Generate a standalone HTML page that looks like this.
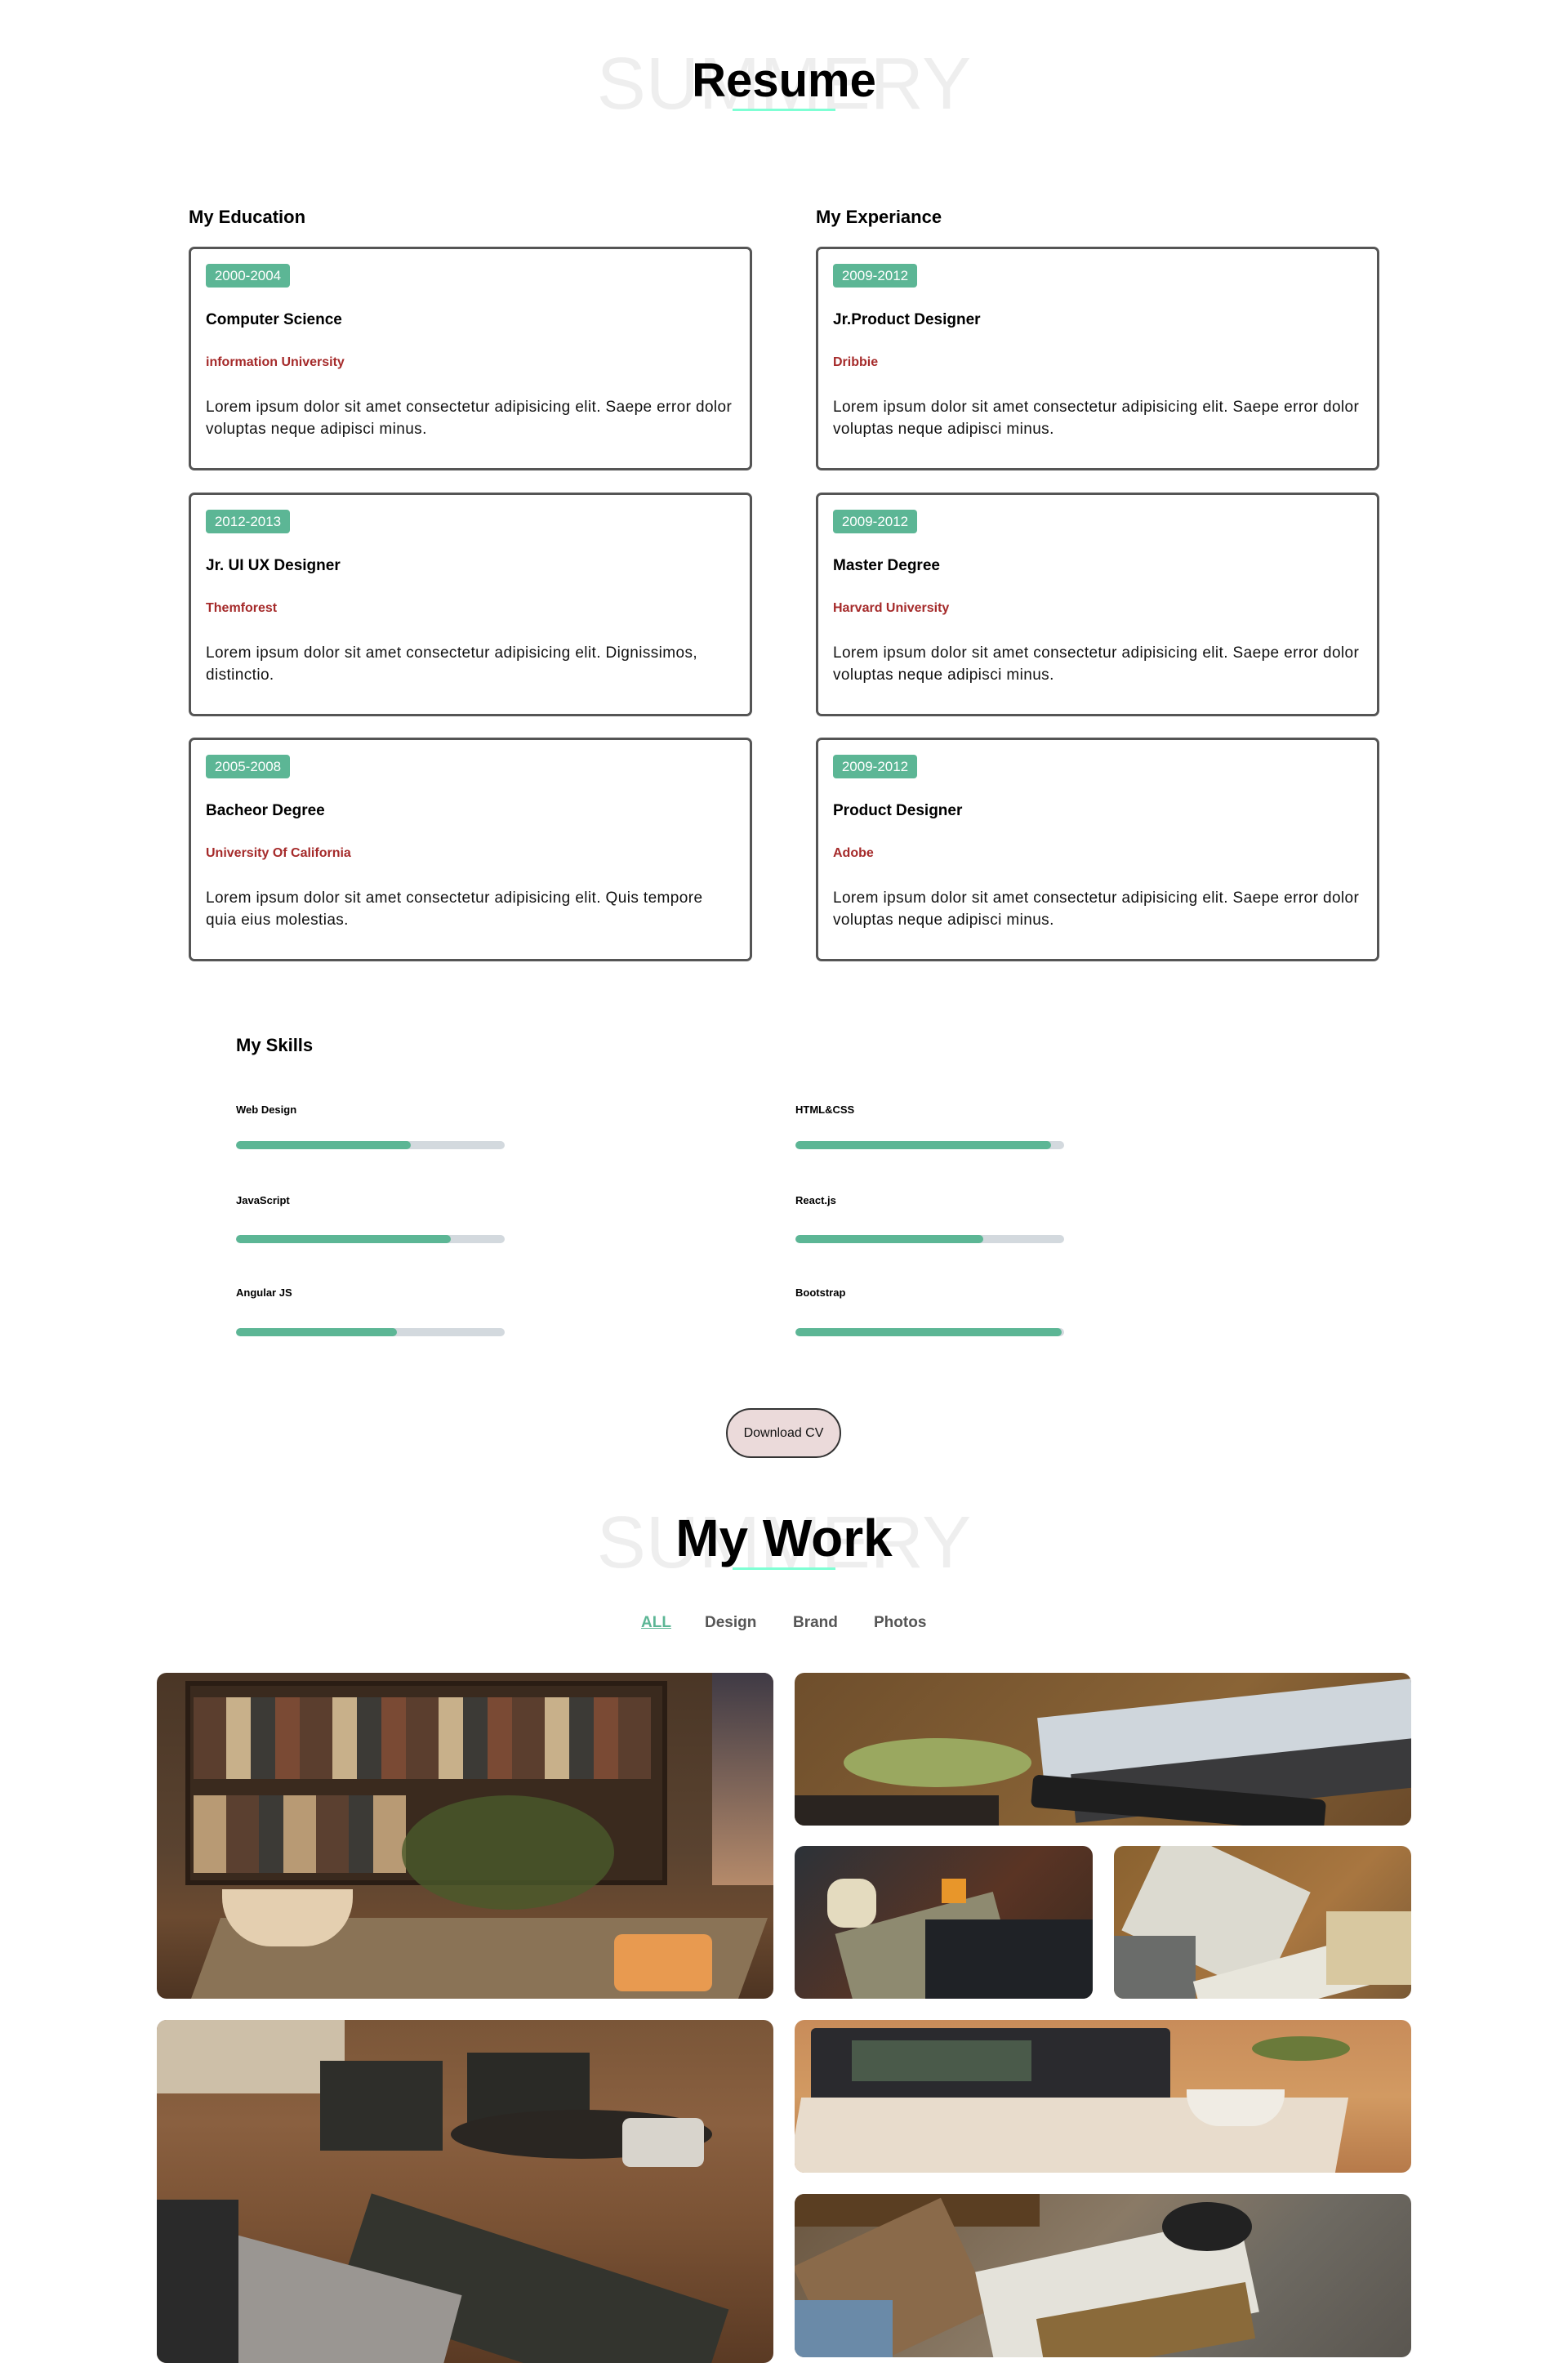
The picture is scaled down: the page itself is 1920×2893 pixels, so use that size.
<!DOCTYPE html>
<html><head><meta charset="utf-8"><style>
*{margin:0;padding:0;box-sizing:border-box}
body{width:1920px;height:2872px;background:#fff;position:relative;overflow:hidden;font-family:"Liberation Sans",Arial,sans-serif;color:#000}
.a{position:absolute;white-space:nowrap;line-height:1}
.ghost{font-size:90px;color:#eeeeee;font-weight:300;width:1920px;text-align:center;left:0}
.title{font-size:58px;font-weight:bold;width:1920px;text-align:center;left:0}
.ul{position:absolute;left:897px;width:126px;height:3px;background:#7fffd4}
.h{font-size:22px;font-weight:bold}
.card{position:absolute;width:690px;height:274px;border:3px solid #555;border-radius:7px}
.badge{position:absolute;left:18px;top:18px;width:103px;height:29px;background:#5cb695;color:#fff;font-size:17px;line-height:29px;text-align:center;border-radius:4px}
.ct{position:absolute;left:18px;top:77px;font-size:19px;font-weight:bold;line-height:1;white-space:nowrap}
.cr{position:absolute;left:18px;top:131px;font-size:16px;font-weight:bold;color:#a52a2a;line-height:1;white-space:nowrap}
.cp{position:absolute;left:18px;top:180px;font-size:19px;letter-spacing:0.4px;line-height:27px;white-space:nowrap;color:#111}
.lbl{font-size:13px;font-weight:bold}
.bar{position:absolute;width:329px;height:10px;background:#d3d9de;border-radius:5px;overflow:hidden}
.bar i{display:block;height:100%;background:#5cb695;border-radius:5px}
.btn{position:absolute;left:889px;top:1724px;width:141px;height:61px;border:2px solid #333;border-radius:31px;background:#ebdada;font-size:16px;text-align:center;line-height:57px;color:#111}
.f{font-size:19px;font-weight:bold;color:#555;top:1977px}
.img{position:absolute;border-radius:12px;overflow:hidden}
.img div{position:absolute}
</style></head><body>

<div class="a ghost" style="top:58px">SUMMERY</div>
<div class="a title" style="top:70px">Resume</div>
<div class="ul" style="top:133px"></div>

<div class="a h" style="left:231px;top:255px">My Education</div>
<div class="a h" style="left:999px;top:255px">My Experiance</div>

<div class="card" style="left:231px;top:302px"><div class="badge">2000-2004</div><div class="ct">Computer Science</div><div class="cr">information University</div><div class="cp">Lorem ipsum dolor sit amet consectetur adipisicing elit. Saepe error dolor<br>voluptas neque adipisci minus.</div></div>
<div class="card" style="left:231px;top:603px"><div class="badge">2012-2013</div><div class="ct">Jr. UI UX Designer</div><div class="cr">Themforest</div><div class="cp">Lorem ipsum dolor sit amet consectetur adipisicing elit. Dignissimos,<br>distinctio.</div></div>
<div class="card" style="left:231px;top:903px"><div class="badge">2005-2008</div><div class="ct">Bacheor Degree</div><div class="cr">University Of California</div><div class="cp">Lorem ipsum dolor sit amet consectetur adipisicing elit. Quis tempore<br>quia eius molestias.</div></div>

<div class="card" style="left:999px;top:302px"><div class="badge">2009-2012</div><div class="ct">Jr.Product Designer</div><div class="cr">Dribbie</div><div class="cp">Lorem ipsum dolor sit amet consectetur adipisicing elit. Saepe error dolor<br>voluptas neque adipisci minus.</div></div>
<div class="card" style="left:999px;top:603px"><div class="badge">2009-2012</div><div class="ct">Master Degree</div><div class="cr">Harvard University</div><div class="cp">Lorem ipsum dolor sit amet consectetur adipisicing elit. Saepe error dolor<br>voluptas neque adipisci minus.</div></div>
<div class="card" style="left:999px;top:903px"><div class="badge">2009-2012</div><div class="ct">Product Designer</div><div class="cr">Adobe</div><div class="cp">Lorem ipsum dolor sit amet consectetur adipisicing elit. Saepe error dolor<br>voluptas neque adipisci minus.</div></div>

<div class="a h" style="left:289px;top:1269px">My Skills</div>
<div class="a lbl" style="left:289px;top:1352px">Web Design</div>
<div class="a lbl" style="left:974px;top:1352px">HTML&amp;CSS</div>
<div class="a lbl" style="left:289px;top:1463px">JavaScript</div>
<div class="a lbl" style="left:974px;top:1463px">React.js</div>
<div class="a lbl" style="left:289px;top:1576px">Angular JS</div>
<div class="a lbl" style="left:974px;top:1576px">Bootstrap</div>
<div class="bar" style="left:289px;top:1397px"><i style="width:65%"></i></div>
<div class="bar" style="left:974px;top:1397px"><i style="width:95%"></i></div>
<div class="bar" style="left:289px;top:1512px"><i style="width:80%"></i></div>
<div class="bar" style="left:974px;top:1512px"><i style="width:70%"></i></div>
<div class="bar" style="left:289px;top:1626px"><i style="width:60%"></i></div>
<div class="bar" style="left:974px;top:1626px"><i style="width:99%"></i></div>

<div class="btn">Download CV</div>

<div class="a ghost" style="top:1844px">SUMMERY</div>
<div class="a title" style="top:1851px;font-size:64px">My Work</div>
<div class="ul" style="top:1919px"></div>

<div class="a f" style="left:785px;color:#5cb695;text-decoration:underline">ALL</div>
<div class="a f" style="left:863px">Design</div>
<div class="a f" style="left:971px">Brand</div>
<div class="a f" style="left:1070px">Photos</div>

<!-- gallery -->
<div class="img" style="left:192px;top:2048px;width:755px;height:399px;background:linear-gradient(180deg,#4a3626 0%,#5a4330 55%,#6b4a30 75%,#4d3422 100%)">
 <div style="left:35px;top:10px;width:590px;height:250px;background:#3a2a1e;border:6px solid #2a1d14"></div>
 <div style="left:45px;top:30px;width:560px;height:100px;background:repeating-linear-gradient(90deg,#5b3e2e 0 40px,#c8b08a 40px 70px,#3c3a36 70px 100px,#7a4a34 100px 130px)"></div>
 <div style="left:45px;top:150px;width:260px;height:95px;background:repeating-linear-gradient(90deg,#b89a74 0 40px,#5b4030 40px 80px,#3c3a36 80px 110px)"></div>
 <div style="left:680px;top:0;width:75px;height:260px;background:linear-gradient(#3f3a45,#b58a6a)"></div>
 <div style="left:300px;top:150px;width:260px;height:140px;border-radius:50%;background:#4a5a2a;opacity:.8"></div>
 <div style="left:60px;top:300px;width:670px;height:99px;background:#8a7356;transform:skewX(-20deg)"></div>
 <div style="left:80px;top:265px;width:160px;height:70px;border-radius:0 0 60px 60px;background:#e4cfb0"></div>
 <div style="left:560px;top:320px;width:120px;height:70px;border-radius:10px;background:#e89a50"></div>
</div>

<div class="img" style="left:973px;top:2048px;width:755px;height:187px;background:linear-gradient(135deg,#6e4e2c,#8a6436 60%,#6a4a2a)">
 <div style="left:300px;top:30px;width:480px;height:80px;background:#cfd6dc;transform:rotate(-6deg)"></div>
 <div style="left:340px;top:100px;width:460px;height:60px;background:#3a3a3c;transform:rotate(-6deg)"></div>
 <div style="left:60px;top:80px;width:230px;height:60px;border-radius:50%;background:#9aa860"></div>
 <div style="left:290px;top:140px;width:360px;height:40px;border-radius:8px;background:#1e1e1e;transform:rotate(5deg)"></div>
 <div style="left:0;top:150px;width:250px;height:40px;background:#2a2420"></div>
</div>

<div class="img" style="left:973px;top:2260px;width:365px;height:187px;background:linear-gradient(135deg,#2c3238,#5a3424 55%,#3a2a20)">
 <div style="left:60px;top:80px;width:200px;height:107px;background:#8e8a70;transform:rotate(-15deg)"></div>
 <div style="left:160px;top:90px;width:230px;height:120px;background:#1f2226"></div>
 <div style="left:40px;top:40px;width:60px;height:60px;border-radius:20px;background:#e4dbbf"></div>
 <div style="left:180px;top:40px;width:30px;height:30px;background:#e8962a"></div>
</div>

<div class="img" style="left:1364px;top:2260px;width:364px;height:187px;background:linear-gradient(135deg,#8a6230,#a87640 60%,#7a5a36)">
 <div style="left:30px;top:10px;width:190px;height:140px;background:#dcdad0;transform:rotate(25deg)"></div>
 <div style="left:0;top:110px;width:100px;height:77px;background:#6a6c6a"></div>
 <div style="left:100px;top:130px;width:270px;height:60px;background:#e8e6dc;transform:rotate(-15deg)"></div>
 <div style="left:260px;top:80px;width:104px;height:90px;background:#d8c8a0"></div>
</div>

<div class="img" style="left:192px;top:2473px;width:755px;height:420px;background:linear-gradient(180deg,#7a5638 0%,#8a6040 30%,#7a5234 60%,#5a3a24 100%)">
 <div style="left:0;top:0;width:230px;height:90px;background:#cdbfa8"></div>
 <div style="left:200px;top:50px;width:150px;height:110px;background:#2e2e2a"></div>
 <div style="left:380px;top:40px;width:150px;height:100px;background:#2a2a26"></div>
 <div style="left:360px;top:110px;width:320px;height:60px;border-radius:50%;background:#2a2622"></div>
 <div style="left:570px;top:120px;width:100px;height:60px;border-radius:10px;background:#d8d4cc"></div>
 <div style="left:230px;top:280px;width:460px;height:140px;background:#33342e;transform:rotate(18deg)"></div>
 <div style="left:-60px;top:280px;width:420px;height:160px;background:#9a9692;transform:rotate(15deg)"></div>
 <div style="left:-20px;top:220px;width:120px;height:200px;background:#2a2a2a"></div>
</div>

<div class="img" style="left:973px;top:2473px;width:755px;height:187px;background:linear-gradient(180deg,#c88c5a 0%,#d29a62 50%,#b67a4a 100%)">
 <div style="left:20px;top:10px;width:440px;height:90px;background:#2a2a2e;border-radius:6px"></div>
 <div style="left:70px;top:25px;width:220px;height:50px;background:#4a5a4a"></div>
 <div style="left:0;top:95px;width:670px;height:92px;background:#e8dccc;transform:skewX(-10deg)"></div>
 <div style="left:480px;top:85px;width:120px;height:45px;border-radius:0 0 40px 40px;background:#f0ece4"></div>
 <div style="left:560px;top:20px;width:120px;height:30px;background:#6a7a3a;border-radius:50%"></div>
</div>

<div class="img" style="left:973px;top:2686px;width:755px;height:200px;background:linear-gradient(135deg,#6a5640,#8a7a66 45%,#6e6a62 70%,#5a5650)">
 <div style="left:0;top:0;width:300px;height:40px;background:#5a3e22"></div>
 <div style="left:20px;top:40px;width:200px;height:150px;background:#8a6a4a;transform:rotate(-25deg)"></div>
 <div style="left:230px;top:60px;width:330px;height:120px;background:#e4e2da;transform:rotate(-12deg)"></div>
 <div style="left:450px;top:10px;width:110px;height:60px;border-radius:50%;background:#222"></div>
 <div style="left:0;top:130px;width:120px;height:70px;background:#6a8aa8"></div>
 <div style="left:300px;top:130px;width:260px;height:70px;background:#8a6a3a;transform:rotate(-10deg)"></div>
</div>

</body></html>
